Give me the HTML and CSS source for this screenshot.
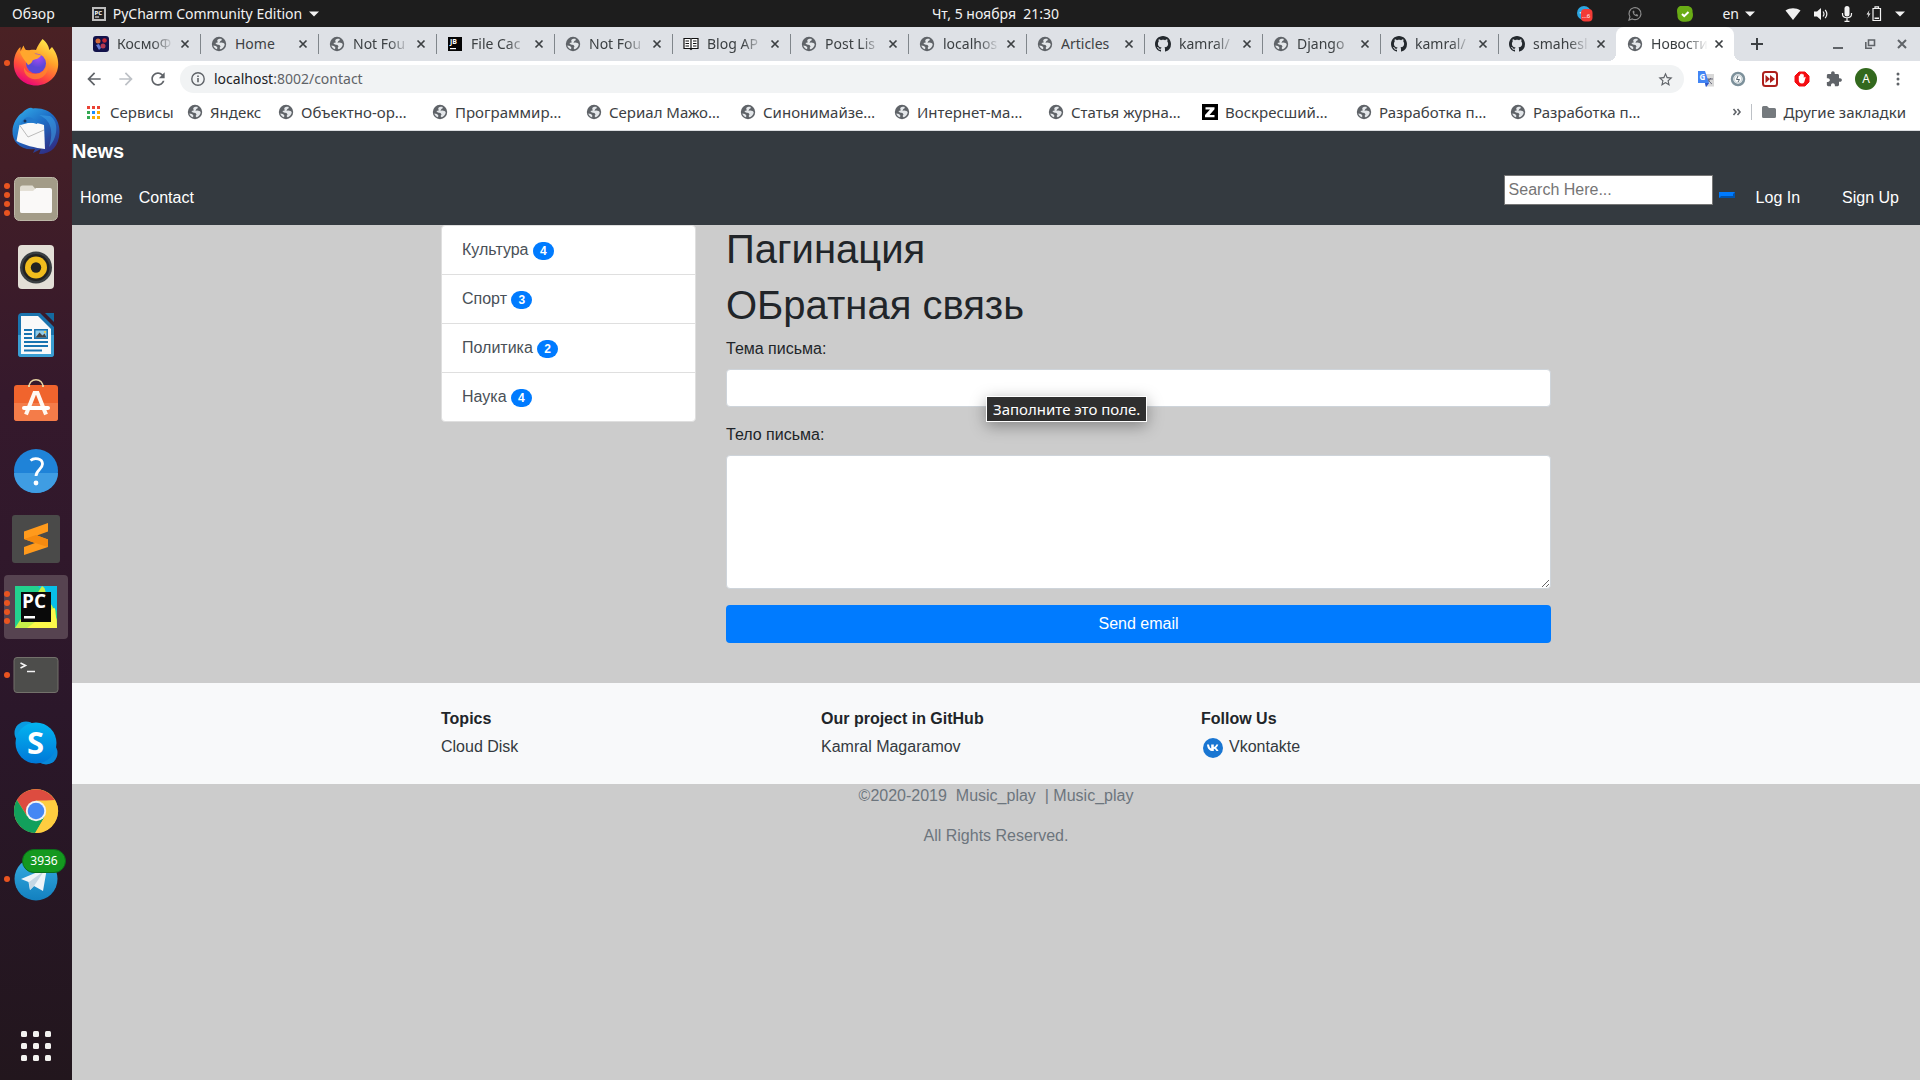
FILE: index.html
```html
<!DOCTYPE html>
<html lang="ru">
<head>
<meta charset="utf-8">
<meta name="viewport" content="width=device-width, initial-scale=1">
<title>Новости</title>
<link rel="stylesheet" href="styles.css">
</head>
<body>
<svg class="defs" aria-hidden="true">
  <symbol id="globe" viewBox="0 0 16 16"><circle cx="8" cy="8" r="7.2" fill="#5f6368"/><path d="M6.2 4.2c.6-1.200 2.600-1.600 4-1.500l.8 1.300-1.600 1-1 1.700 2-.2c1.400.2 3 .6 3.300 1.800-.1 2.400-2.200 4.600-4.400 5l-.7-1.300.9-1.500-1-1.400-2.700-.7-1.500-1.300 2.400-.6z" fill="#e4e7ea"/><path d="M2.300 9.500l2.700.6 1.400 1.400-.4 1.800C4 12.600 2.700 11.300 2.300 9.500z" fill="#e4e7ea"/></symbol>
  <symbol id="github" viewBox="0 0 16 16"><path fill="#24292e" d="M8 0C3.580 0 0 3.580 0 8c0 3.540 2.290 6.530 5.470 7.590.4.070.55-.17.55-.38 0-.19-.01-.82-.01-1.490-2.010.37-2.530-.49-2.690-.94-.09-.23-.48-.94-.82-1.130-.28-.15-.68-.52-.01-.53.63-.01 1.080.58 1.230.82.72 1.210 1.870.87 2.330.66.07-.52.28-.87.51-1.070-1.780-.2-3.640-.89-3.640-3.950 0-.87.31-1.590.82-2.150-.08-.2-.36-1.020.08-2.120 0 0 .67-.21 2.200.82.64-.18 1.320-.27 2-.27.68 0 1.360.09 2 .27 1.530-1.040 2.200-.82 2.200-.82.44 1.100.16 1.920.08 2.120.51.56.82 1.270.82 2.150 0 3.070-1.870 3.750-3.650 3.950.29.25.54.73.54 1.480 0 1.070-.01 1.930-.01 2.200 0 .21.15.46.55.38A8.010 8.010 0 0 0 16 8c0-4.420-3.580-8-8-8z"/></symbol>
  <symbol id="cross" viewBox="0 0 14 14"><path d="M3.500 3.500l7 7M10.500 3.500l-7 7" stroke="currentColor" stroke-width="1.700"/></symbol>
  <symbol id="caret" viewBox="0 0 10 6"><path d="M0 .5h10L5 5.500z" fill="currentColor"/></symbol>
</svg>

<header class="topbar">
  <div class="topbar-left">
    <button class="top-item overview">Обзор</button>
    <button class="top-item app-menu">
      <svg width="14" height="14" viewBox="0 0 14 14"><path d="M0 0h14v14H0z" fill="#bdbdbd"/><path d="M2 2h10v10H2z" fill="#222"/><text x="2.500" y="7.500" font-size="6" font-weight="700" fill="#fff">PC</text><path d="M3 9.500h4v1H3z" fill="#fff"/></svg>
      PyCharm Community Edition
      <svg width="10" height="6"><use href="#caret"/></svg>
    </button>
  </div>
  <button class="top-item clock">Чт, 5 ноября &nbsp;21:30</button>
  <div class="topbar-right">
    <div class="tray">
      <svg width="16" height="16" viewBox="0 0 16 16"><circle cx="7" cy="7" r="7" fill="#2ca5e0"/><path d="M2 7l4-2v3z" fill="#fff"/><rect x="4" y="3" width="11.500" height="12.500" rx="4" fill="#f23b36"/><text x="5" y="12" font-size="6" fill="#fff">...6</text></svg>
      <svg width="16" height="16" viewBox="0 0 16 16" fill="none" stroke="#8c8c8c"><path d="M2 14l.9-3.200A6 6 0 1 1 5.300 13z" stroke-width="1.200"/><path d="M5.600 5.200c0 3 2.300 5 5 5.200l.7-1.500-1.800-.8-.8.7c-.9-.4-1.400-1-1.700-1.700l.7-.8-.8-1.700z" fill="#8c8c8c" stroke="none"/></svg>
      <svg width="16" height="16" viewBox="0 0 16 16"><path d="M3 0h7c4 0 6 3 5.500 6 1.500 4-.5 10-5 9.500C5 16.500 0 15 .5 9 0 6-1 2 3 0z" fill="#69ac15"/><path d="M5 8l2.200 2.200L11.500 6" stroke="#fff" stroke-width="2" fill="none"/></svg>
    </div>
    <button class="top-item lang">en <svg width="10" height="6"><use href="#caret"/></svg></button>
    <div class="status">
      <svg width="16" height="14" viewBox="0 0 16 14"><path d="M.5 3.500C5 .4 11 .4 15.500 3.500L8 13z" fill="#f2f2f2"/></svg>
      <svg width="16" height="14" viewBox="0 0 16 14"><path d="M1 4.500h3L8 1v12L4 9.500H1z" fill="#f2f2f2"/><path d="M10 4.500q2 2.500 0 5M12.200 2.800q3.300 4.200 0 8.400" stroke="#f2f2f2" fill="none" stroke-width="1.200"/></svg>
      <svg width="12" height="16" viewBox="0 0 12 16"><rect x="3.500" y="0" width="5" height="10.500" rx="2.500" fill="#f2f2f2"/><path d="M1.500 7v1c0 5 9 5 9 0V7M6 12v3M3.500 15.300h5" stroke="#f2f2f2" fill="none" stroke-width="1.200"/></svg>
      <svg width="18" height="16" viewBox="0 0 18 16"><path d="M4.500 4L1.500 8.500h2L2.500 12l3-4.500h-2z" fill="#f2f2f2"/><path d="M8 2.500h7.500v12H8zM10 2V.8h3.500V2" stroke="#f2f2f2" stroke-width="1.200" fill="none"/><path d="M9.500 11.500h4.500v1.500H9.500z" fill="#f2f2f2"/></svg>
      <svg width="10" height="6"><use href="#caret"/></svg>
    </div>
  </div>
</header>

<div class="desktop">
<nav class="dock" aria-label="Dock">
  <button class="launcher" aria-label="Firefox"><span class="dots"><i></i></span>
    <svg width="48" height="48" viewBox="0 1 48 48"><defs><linearGradient id="ff1" x1=".8" y1="0" x2=".3" y2="1"><stop offset="0" stop-color="#fff44f"/><stop offset=".4" stop-color="#ffa02a"/><stop offset=".72" stop-color="#ff4a3d"/><stop offset="1" stop-color="#e8007e"/></linearGradient><radialGradient id="ff2" cx=".6" cy=".2"><stop offset="0" stop-color="#a64bf5"/><stop offset="1" stop-color="#5b47d6"/></radialGradient></defs><path d="M30.500 1c5 4 6.500 8 6.700 11l2.800-3c4 5 6.400 11 6.200 17.500C46 38.500 36 47.500 24 47.500S2 38.500 1.800 26.500C1.600 19 4.500 12 8.500 9v4l3-5.500c1 3 2 4.500 4 5.500 3-1.500 6-1.500 8.500-1C25.500 8 28 4 30.500 1z" fill="url(#ff1)"/><circle cx="24" cy="25.500" r="10" fill="url(#ff2)"/><path d="M8 14c5-3.500 12-2 15 2l6 1c-1 3.500-5 4-8 5-1 1.500-1.500 4-5 5-1-2-6-7-8-13z" fill="#ffa72d"/><path d="M33 15c7 10 0 21-10 21-7 0-10-4-11-7-1 8 6 13 13 12 11-1 15-15 8-26z" fill="#ff8a2b" opacity=".7"/></svg>
  </button>
  <button class="launcher" aria-label="Thunderbird">
    <svg width="48" height="48" viewBox="0 0 48 48"><defs><linearGradient id="tb" x1="0" y1="0" x2=".7" y2="1"><stop offset="0" stop-color="#34b3ee"/><stop offset=".5" stop-color="#1d6cc5"/><stop offset="1" stop-color="#2f2f86"/></linearGradient></defs><path d="M10 6C15 1 19 0 21 1.500 38 0 48 12 47.500 25 47 39 40 47 27 47l2-5-8 4 2-4C9 44 0 35 .5 24 .6 17 5 9 10 6z" fill="url(#tb)"/><path d="M27 8c12 5 15 16 10 32 8-8 11-25 1-31z" fill="#3fa8ec" opacity=".5"/><path d="M7.500 18C14 15 24 15 32 18l1 24C23 41 12 38 4.500 34z" fill="#f8f8f8"/><path d="M7.500 18l8.500 12 16-7" stroke="#bbb" fill="none"/><path d="M8 18c3-7 7-9 12-7 5 3 6 5 5 6-8-3-12 0-17 1z" fill="#227ace"/><circle cx="13" cy="14" r="1.500" fill="#15325b"/></svg>
  </button>
  <button class="launcher" aria-label="Файлы"><span class="dots"><i></i><i></i><i></i><i></i></span>
    <svg width="48" height="48" viewBox="0 0 48 48"><rect x="2.500" y="2.500" width="43" height="43" rx="5" fill="#a39c88" stroke="#bdb8a8"/><path d="M8 13q0-2.500 2.500-2.500h10l3 3.500H38v10H8z" fill="#e1ddd2"/><rect x="8" y="15" width="32" height="23" rx="2" fill="#e4e0d6"/><path d="M8 16h13l3-3h14q2 0 2 2v21q0 2-2 2H10q-2 0-2-2z" fill="#faf9f8"/></svg>
  </button>
  <button class="launcher" aria-label="Rhythmbox">
    <svg width="48" height="48" viewBox="0 0 48 48"><rect x="6" y="2" width="36" height="44" rx="4" fill="#e3dfd7"/><circle cx="24" cy="24.500" r="16" fill="#3a3f42"/><circle cx="24" cy="24.500" r="13.500" fill="#222"/><circle cx="24" cy="24.500" r="11" fill="#f0bc1d"/><circle cx="24" cy="24.500" r="5.200" fill="#222"/></svg>
  </button>
  <button class="launcher" aria-label="LibreOffice Writer">
    <svg width="48" height="48" viewBox="0 0 48 48"><path d="M10 2h18l14 14v27q0 3-3 3H9q-3 0-3-3V6q0-4 4-4z" fill="#1a74ae"/><path d="M6 24h36v19q0 3-3 3H9q-3 0-3-3z" fill="#3a9ed2"/><path d="M33 2h9v9z" fill="#146aa0"/><path d="M9 5h17l13 13v25H9z" fill="#f9f9f9"/><path d="M12 19h8M12 23h8M12 27h8M12 31h24M12 35h24M12 39.500h18" stroke="#1873b0" stroke-width="1.800"/><path d="M22 18h14v10H22z" fill="#1873b0"/><path d="M23.500 19.500h11v7h-11z" fill="#8fcbe9"/><path d="M23.500 26.500l4-5 3 3 2-2 2 4z" fill="#444"/><circle cx="33" cy="21" r="1" fill="#fc3"/></svg>
  </button>
  <button class="launcher" aria-label="Ubuntu Software">
    <svg width="48" height="48" viewBox="0 4 48 48"><path d="M17 13c-1-11 15-11 14 0" fill="none" stroke="#e7d3a1" stroke-width="1.500"/><rect x="2" y="10" width="44" height="36" rx="3" fill="#f0642d"/><path d="M2 28h44v15q0 3-3 3H5q-3 0-3-3z" fill="#f47c49"/><path d="M17 10v2M31 10v2" stroke="#e7d3a1" stroke-width="2"/><path d="M14 39.500L22.500 18h3L34 39.500" fill="none" stroke="#fff8f2" stroke-width="4"/><path d="M12 33h24" stroke="#fff" stroke-width="4" stroke-linecap="round"/></svg>
  </button>
  <button class="launcher" aria-label="Справка">
    <svg width="48" height="48" viewBox="0 0 48 48"><circle cx="24" cy="24" r="22" fill="#1f83d8"/><path d="M2 26a22 20 0 0 0 44 0z" fill="#3f9de3"/><path d="M18.500 13.500c4-3.500 12-2 12 3.500 0 5-6.500 6-6.500 12" fill="none" stroke="#fff" stroke-width="2.800"/><circle cx="24" cy="36" r="2.400" fill="#fff"/></svg>
  </button>
  <button class="launcher" aria-label="Sublime Text">
    <svg width="48" height="48" viewBox="0 0 48 48"><rect width="48" height="48" rx="3" fill="#4a4a49"/><path d="M12 16.500L36 8v8.500L25 20.500l11 4V32L12 40v-8l11-4-11-4z" fill="#ff9a1c"/><path d="M12 24l11 4 13 4v-7.500L24 20z" fill="#f58a10"/></svg>
  </button>
  <button class="launcher running" aria-label="PyCharm"><span class="dots"><i></i><i></i><i></i><i></i></span>
    <svg width="48" height="48" viewBox="0 0 48 48"><path d="M3 3h42v42H3z" fill="#23d28e"/><path d="M26 3h19v25z" fill="#0fc5e6"/><path d="M3 45L30 3l5 4 10 30v8z" fill="#c7f04a"/><path d="M15 45l28-21 2 21z" fill="#fdf84a"/><path d="M32 3h13v25l-9-10z" fill="#08bfe8"/><path d="M9 9h30v30H9z" fill="#0a0a0a"/><text class="logo-text" x="10" y="25" font-size="19">PC</text><path d="M12 33h11v2.500H12z" fill="#fff"/></svg>
  </button>
  <button class="launcher" aria-label="Терминал"><span class="dots"><i></i></span>
    <svg width="48" height="48" viewBox="0 0 48 48"><rect x="2" y="6.500" width="44" height="35" rx="3" fill="#4d4d4b" stroke="#73716b"/><path d="M8.500 12l5 2.500-5 2.500M15 20.500h8" stroke="#f4f4f4" fill="none" stroke-width="1.600"/></svg>
  </button>
  <button class="launcher" aria-label="Skype">
    <svg width="48" height="48" viewBox="0 0 48 48"><defs><linearGradient id="sk" x2="0" y2="1"><stop offset="0" stop-color="#03b4f0"/><stop offset="1" stop-color="#0078d8"/></linearGradient></defs><circle cx="14" cy="14" r="11.500" fill="#0a9be0"/><circle cx="34" cy="34" r="11.500" fill="#0889da"/><circle cx="24" cy="24" r="20.500" fill="url(#sk)"/><text class="logo-text" x="15" y="35" font-size="31">S</text></svg>
  </button>
  <button class="launcher" aria-label="Chrome">
    <svg width="48" height="48" viewBox="0 0 48 48"><circle cx="24" cy="24" r="22" fill="#fecd40"/><path d="M4.900 13A22 22 0 0 1 43 13.500H24L15 29z" fill="#dd4c40"/><path d="M4.900 13A22 22 0 0 0 23.500 46L33 29 15 29z" fill="#12a05c"/><path d="M43 13A22 22 0 0 1 23 46l9-15 2-17z" fill="#fecd40"/><circle cx="24" cy="24" r="10.200" fill="#f2f2f2"/><circle cx="24" cy="24" r="8.300" fill="#4587f4"/></svg>
  </button>
  <button class="launcher" aria-label="Telegram"><span class="dots"><i></i></span>
    <svg width="48" height="48" viewBox="0 0 48 48"><defs><linearGradient id="tg" x2="0" y2="1"><stop offset="0" stop-color="#37aee2"/><stop offset="1" stop-color="#1380bf"/></linearGradient></defs><circle cx="24" cy="24" r="21.500" fill="url(#tg)"/><path d="M9 24l26-11-4 23-9-5-4 4-1.500-8z" fill="#eff4f8"/><path d="M17 27l15-11-10 15-4 4z" fill="#c5d7e4"/></svg>
    <span class="count">3936</span>
  </button>
  <button class="launcher apps" aria-label="Показать приложения">
    <svg width="32" height="32" viewBox="0 0 32 32" fill="#f3f2f0"><rect x="1" y="1" width="6" height="6" rx="1.500"/><rect x="13" y="1" width="6" height="6" rx="1.500"/><rect x="25" y="1" width="6" height="6" rx="1.500"/><rect x="1" y="13" width="6" height="6" rx="1.500"/><rect x="13" y="13" width="6" height="6" rx="1.500"/><rect x="25" y="13" width="6" height="6" rx="1.500"/><rect x="1" y="25" width="6" height="6" rx="1.500"/><rect x="13" y="25" width="6" height="6" rx="1.500"/><rect x="25" y="25" width="6" height="6" rx="1.500"/></svg>
  </button>
</nav>

<div class="browser">
  <div class="tabstrip">
    <div class="tab"><svg class="fav" viewBox="0 0 16 16"><rect width="16" height="16" rx="3" fill="#12124a"/><circle cx="5" cy="5" r="2.500" fill="#d46a3a"/><circle cx="11.500" cy="4.500" r="2.300" fill="#c42834"/><circle cx="10" cy="10" r="2.500" fill="#b43a52"/><path d="M3 9l3-1 2 4-2 2z" fill="#6479d2"/></svg><a href="#" class="tab-title">КосмоФ</a><button class="tab-close" aria-label="Закрыть"><svg width="14" height="14"><use href="#cross"/></svg></button></div>
    <div class="tab"><svg class="fav"><use href="#globe"/></svg><a href="#" class="tab-title whole">Home</a><button class="tab-close" aria-label="Закрыть"><svg width="14" height="14"><use href="#cross"/></svg></button></div>
    <div class="tab"><svg class="fav"><use href="#globe"/></svg><a href="#" class="tab-title">Not Fou</a><button class="tab-close" aria-label="Закрыть"><svg width="14" height="14"><use href="#cross"/></svg></button></div>
    <div class="tab"><svg class="fav" viewBox="0 0 16 16"><path d="M1 1h14v14H1z" fill="#050505"/><text class="logo-text" x="3" y="8" font-size="7">JB</text><path d="M3 12h6v1.200H3z" fill="#fff"/></svg><a href="#" class="tab-title">File Cac</a><button class="tab-close" aria-label="Закрыть"><svg width="14" height="14"><use href="#cross"/></svg></button></div>
    <div class="tab"><svg class="fav"><use href="#globe"/></svg><a href="#" class="tab-title">Not Fou</a><button class="tab-close" aria-label="Закрыть"><svg width="14" height="14"><use href="#cross"/></svg></button></div>
    <div class="tab"><svg class="fav" viewBox="0 0 16 16"><path d="M1 2.500h6l1 .7 1-.7h6v10H9l-1 1-1-1H1zM8 3v10M2.500 5H6M2.500 7.500H6M2.500 10H6M10 5h3.500M10 7.500h3.500M10 10h3.500" fill="#fff" stroke="#111" stroke-width="1.200"/></svg><a href="#" class="tab-title">Blog AP</a><button class="tab-close" aria-label="Закрыть"><svg width="14" height="14"><use href="#cross"/></svg></button></div>
    <div class="tab"><svg class="fav"><use href="#globe"/></svg><a href="#" class="tab-title">Post Lis</a><button class="tab-close" aria-label="Закрыть"><svg width="14" height="14"><use href="#cross"/></svg></button></div>
    <div class="tab"><svg class="fav"><use href="#globe"/></svg><a href="#" class="tab-title">localhos</a><button class="tab-close" aria-label="Закрыть"><svg width="14" height="14"><use href="#cross"/></svg></button></div>
    <div class="tab"><svg class="fav"><use href="#globe"/></svg><a href="#" class="tab-title whole">Articles</a><button class="tab-close" aria-label="Закрыть"><svg width="14" height="14"><use href="#cross"/></svg></button></div>
    <div class="tab"><svg class="fav"><use href="#github"/></svg><a href="#" class="tab-title">kamral/</a><button class="tab-close" aria-label="Закрыть"><svg width="14" height="14"><use href="#cross"/></svg></button></div>
    <div class="tab"><svg class="fav"><use href="#globe"/></svg><a href="#" class="tab-title">Django</a><button class="tab-close" aria-label="Закрыть"><svg width="14" height="14"><use href="#cross"/></svg></button></div>
    <div class="tab"><svg class="fav"><use href="#github"/></svg><a href="#" class="tab-title">kamral/</a><button class="tab-close" aria-label="Закрыть"><svg width="14" height="14"><use href="#cross"/></svg></button></div>
    <div class="tab"><svg class="fav"><use href="#github"/></svg><a href="#" class="tab-title">smahesl</a><button class="tab-close" aria-label="Закрыть"><svg width="14" height="14"><use href="#cross"/></svg></button></div>
    <div class="tab active"><svg class="fav"><use href="#globe"/></svg><a href="#" class="tab-title">Новости</a><button class="tab-close" aria-label="Закрыть"><svg width="14" height="14"><use href="#cross"/></svg></button></div>
    <button class="new-tab" aria-label="Новая вкладка"><svg width="14" height="14" viewBox="0 0 14 14"><path d="M7 1v12M1 7h12" stroke="#3c4043" stroke-width="2"/></svg></button>
    <div class="window-controls">
      <button aria-label="Свернуть"><svg width="14" height="14" viewBox="0 0 14 14"><path d="M2 11h10" stroke="#5f6368" stroke-width="2"/></svg></button>
      <button aria-label="Восстановить"><svg width="14" height="14" viewBox="0 0 14 14" fill="none" stroke="#5f6368" stroke-width="1.600"><path d="M5.500 3h6v5.500h-6zM2.800 5v6.200H9"/></svg></button>
      <button aria-label="Закрыть окно"><svg width="14" height="14" viewBox="0 0 14 14"><path d="M3 3l8 8M11 3l-8 8" stroke="#5f6368" stroke-width="2"/></svg></button>
    </div>
  </div>

  <div class="toolbar">
    <button class="tool" aria-label="Назад"><svg viewBox="0 0 24 24" fill="#5f6368"><path d="M20 11H7.830l5.590-5.590L12 4l-8 8 8 8 1.410-1.410L7.830 13H20v-2z"/></svg></button>
    <button class="tool" aria-label="Вперёд"><svg viewBox="0 0 24 24" fill="#bdc1c6"><path d="M4 11h12.170l-5.590-5.590L12 4l8 8-8 8-1.410-1.410L16.170 13H4v-2z"/></svg></button>
    <button class="tool" aria-label="Обновить"><svg viewBox="0 0 24 24" fill="#5f6368"><path d="M17.650 6.350C16.200 4.900 14.210 4 12 4c-4.420 0-7.990 3.580-7.990 8s3.570 8 7.990 8c3.730 0 6.840-2.550 7.730-6h-2.080c-.82 2.330-3.040 4-5.650 4-3.310 0-6-2.690-6-6s2.690-6 6-6c1.660 0 3.140.69 4.220 1.780L13 11h7V4l-2.350 2.350z"/></svg></button>
    <div class="omnibox">
      <svg width="16" height="16" viewBox="0 0 16 16"><circle cx="8" cy="8" r="6.200" fill="none" stroke="#5f6368" stroke-width="1.400"/><path d="M8 7v4.300M8 4.400v1.500" stroke="#5f6368" stroke-width="1.600"/></svg>
      <a class="url" href="#"><b>localhost</b>:8002/contact</a>
      <button class="star" aria-label="Добавить в закладки"><svg width="17" height="17" viewBox="0 0 24 24" fill="#5f6368"><path d="M22 9.240l-7.190-.62L12 2 9.190 8.630 2 9.240l5.460 4.730L5.820 21 12 17.270 18.180 21l-1.630-7.030L22 9.240zM12 15.400l-3.760 2.270 1-4.280-3.320-2.880 4.380-.38L12 6.100l1.710 4.040 4.380.38-3.320 2.880 1 4.280L12 15.400z"/></svg></button>
    </div>
    <button class="tool" aria-label="Переводчик"><svg viewBox="0 0 20 20"><path d="M8 5h10v12.500h-7z" fill="#d8d8d8"/><path d="M10 15l5-6M11 10h6M12 10c1 3 3 4 4 5" stroke="#667" fill="none"/><path d="M2 2h7l4 12-3 4-1-4H2z" fill="#4285f4"/><path d="M9 14h4l-3 4z" fill="#3457c5"/><text x="3.500" y="11" font-size="8" font-weight="700" fill="#fff">G</text></svg></button>
    <button class="tool" aria-label="Расширение"><svg viewBox="0 0 20 20" fill="none"><circle cx="10" cy="10" r="6" stroke="#7d919b" stroke-width="2.500"/><circle cx="10" cy="10" r="3.800" stroke="#c4cfd3"/><path d="M10 7l-1.500 3.500h3L10 13" stroke="#54656f"/></svg></button>
    <button class="tool" aria-label="Видео"><svg viewBox="0 0 20 20"><rect x="3" y="3" width="14" height="14" rx="2.500" fill="#fff" stroke="#ad201c" stroke-width="2"/><path d="M5.500 6l4.500 4-4.500 4zM10 6l5 4-5 4z" fill="#ad201c"/></svg></button>
    <button class="tool" aria-label="AdBlock"><svg viewBox="0 0 20 20"><path d="M7 3h6l4 4v6l-4 4H7l-4-4V7z" fill="#f40d12" stroke="#f40d12" stroke-linejoin="round"/><path d="M6.800 7q.6-.8 1.200 0V5.500q.6-.8 1.200 0V5q.7-.8 1.400 0v.5q.8-.6 1.200.2V9l1-1.200q.9-.2.8.7L12.300 13q-.6 1.500-2.500 1.500-2.500 0-3-2.500z" fill="#fff"/></svg></button>
    <button class="tool" aria-label="Расширения"><svg viewBox="-2 -2 28 28" fill="#5f6368"><path d="M20.500 11H19V7c0-1.100-.9-2-2-2h-4V3.500C13 2.120 11.880 1 10.500 1S8 2.120 8 3.500V5H4c-1.100 0-1.990.9-1.990 2v3.800H3.500c1.490 0 2.700 1.210 2.700 2.700s-1.210 2.700-2.700 2.700H2V20c0 1.100.9 2 2 2h3.800v-1.500c0-1.490 1.210-2.700 2.700-2.700 1.490 0 2.700 1.210 2.700 2.700V22H17c1.100 0 2-.9 2-2v-4h1.500c1.380 0 2.500-1.120 2.500-2.500S21.880 11 20.500 11z"/></svg></button>
    <button class="tool avatar" aria-label="Профиль"><span>A</span></button>
    <button class="tool" aria-label="Меню"><svg viewBox="0 0 20 20" fill="#5f6368"><circle cx="10" cy="5" r="1.500"/><circle cx="10" cy="10" r="1.500"/><circle cx="10" cy="15" r="1.500"/></svg></button>
  </div>

  <div class="bookmarks">
    <a class="bookmark apps-link" href="#"><svg width="14" height="14" viewBox="0 0 14 14"><path d="M1 1h3v3H1zM6 1h3v3H6zM11 1h3v3h-3z" fill="#ea4335"/><path d="M1 6h3v3H1zM1 11h3v3H1z" fill="#34a853"/><path d="M6 6h3v3H6z" fill="#1a8cff"/><path d="M11 6h3v3h-3zM6 11h3v3H6zM11 11h3v3h-3z" fill="#fbab05"/></svg>Сервисы</a>
    <a class="bookmark short" href="#"><svg class="fav"><use href="#globe"/></svg>Яндекс</a>
    <a class="bookmark" href="#"><svg class="fav"><use href="#globe"/></svg>Объектно-ор…</a>
    <a class="bookmark" href="#"><svg class="fav"><use href="#globe"/></svg>Программир…</a>
    <a class="bookmark" href="#"><svg class="fav"><use href="#globe"/></svg>Сериал Мажо…</a>
    <a class="bookmark" href="#"><svg class="fav"><use href="#globe"/></svg>Синонимайзе…</a>
    <a class="bookmark" href="#"><svg class="fav"><use href="#globe"/></svg>Интернет-ма…</a>
    <a class="bookmark" href="#"><svg class="fav"><use href="#globe"/></svg>Статья журна…</a>
    <a class="bookmark" href="#"><svg class="fav" viewBox="0 0 16 16"><path d="M0 0h16v16H0z"/><path d="M3.500 3.200h9v2L7.500 11h5v2.200h-9.500V11L8 5.400H3.500z" fill="#fff"/></svg>Воскресший…</a>
    <a class="bookmark" href="#"><svg class="fav"><use href="#globe"/></svg>Разработка п…</a>
    <a class="bookmark" href="#"><svg class="fav"><use href="#globe"/></svg>Разработка п…</a>
    <div class="bookmarks-end">
      <button class="more" aria-label="Ещё закладки"><svg width="10" height="10" viewBox="0 0 10 10"><path d="M1.500 2L4 5 1.500 8M5.500 2L8 5 5.500 8" fill="none" stroke="#5f6368" stroke-width="1.600"/></svg></button>
      <a class="bookmark other" href="#"><svg class="fav" viewBox="0 0 16 16"><path d="M1 3.500Q1 2 2.500 2H6l2 2h5.500Q15 4 15 5.500v7q0 1.500-1.500 1.500h-11Q1 14 1 12.500z" fill="#757a7e"/></svg>Другие закладки</a>
    </div>
  </div>

  <div class="page">
    <nav class="navbar">
      <a class="brand" href="#">News</a>
      <div class="nav-row">
        <div class="nav-links"><a href="#">Home</a><a href="#">Contact</a></div>
        <form class="search">
          <input type="text" placeholder="Search Here..." aria-label="Search">
          <button type="button" aria-label="Search"></button>
        </form>
        <div class="nav-auth"><a href="#">Log In</a><a href="#">Sign Up</a></div>
      </div>
    </nav>

    <main class="container content">
      <aside class="list">
        <a href="#">Культура <span class="badge">4</span></a>
        <a href="#">Спорт <span class="badge">3</span></a>
        <a href="#">Политика <span class="badge">2</span></a>
        <a href="#">Наука <span class="badge">4</span></a>
      </aside>
      <section>
        <h1>Пагинация</h1>
        <h1>ОБратная связь</h1>
        <form class="contact-form">
          <label for="subject">Тема письма:</label>
          <div class="field">
            <input id="subject" class="control" type="text" required>
            <div class="tooltip" role="tooltip">Заполните это поле.</div>
          </div>
          <label for="message">Тело письма:</label>
          <textarea id="message" class="control" rows="5" required></textarea>
          <button class="send" type="button">Send email</button>
        </form>
      </section>
    </main>

    <footer>
      <div class="footer-band">
        <div class="container footer-grid">
          <div><h6>Topics</h6><a href="#">Cloud Disk</a></div>
          <div><h6>Our project in GitHub</h6><a href="#">Kamral Magaramov</a></div>
          <div><h6>Follow Us</h6><a class="vk" href="#"><svg width="24" height="24" viewBox="0 0 24 24"><circle cx="12" cy="13" r="10" fill="#1976d2"/><path d="M6 9.500h2c.4 2.200 1.200 3.500 2.200 4V9.500h2.600v2.600c1.200-.3 1.900-1.300 2.500-2.600h2c-.5 1.600-1.300 2.700-2.300 3.400 1.100.7 2 1.700 2.600 3.200h-2.200c-.6-1.200-1.400-2-2.600-2.300v2.300H12c-3.600 0-5.700-2.500-6-6.600z" fill="#fff"/></svg>Vkontakte</a></div>
        </div>
      </div>
      <div class="copyright">
        <p>©2020-2019&nbsp; <a href="#">Music_play</a>&nbsp; | <a href="#">Music_play</a></p>
        <p>All Rights Reserved.</p>
      </div>
    </footer>
  </div>
</div>
</div>
</body>
</html>
```
FILE: styles.css
```css
*, *::before, *::after { box-sizing: border-box; }

body {
  margin: 0;
  min-height: 100vh;
  display: flex;
  flex-direction: column;
  background: #ccc;
  color: #212529;
  font: 16px/24px "Liberation Sans", Arial, sans-serif;
}

a { color: inherit; text-decoration: none; }
h1, h6, p { margin: 0; }
button { font: inherit; color: inherit; cursor: pointer; }
svg { flex: none; display: block; }
.defs { position: absolute; width: 0; height: 0; }

/* Shell top bar */
.topbar {
  display: flex;
  align-items: center;
  height: 27px;
  padding-right: 15px;
  background: #1d1d1d;
  color: #f2f2f2;
  font: 14px/20px "Noto Sans", "Open Sans", sans-serif;
}
.topbar-left { flex: 1 1 86px; display: flex; gap: 37px; padding-left: 12px; }
.topbar-right { flex: 1 1 0; display: flex; align-items: center; justify-content: flex-end; gap: 29px; }
.top-item { display: flex; align-items: center; gap: 6px; padding: 0; border: 0; background: none; white-space: nowrap; }
.app-menu { gap: 7px; }
.tray { display: flex; gap: 34px; }
.status { display: flex; align-items: center; gap: 12px; margin-left: 1px; }

/* Desktop */
.desktop { flex: 1; display: grid; grid-template-columns: 72px minmax(0, 1fr); }
.dock {
  display: flex;
  flex-direction: column;
  padding-top: 2px;
  background: linear-gradient(#4a2124, #35192c 35%, #2b172a 65%, #22161d);
}
.launcher {
  position: relative;
  display: grid;
  place-items: center;
  width: 64px;
  height: 64px;
  margin: 2px 4px;
  padding: 0;
  border: 0;
  border-radius: 4px;
  background: none;
}
.launcher.running { background: #564350; }
.launcher.apps { margin-top: auto; }
.dots {
  position: absolute;
  left: 0;
  top: 0;
  bottom: 0;
  display: flex;
  flex-direction: column;
  justify-content: center;
  gap: 3px;
}
.dots i { width: 6px; height: 6px; border-radius: 50%; background: #e95420; }
.logo-text { font-family: "Open Sans", sans-serif; font-weight: 700; fill: #fff; }
.count {
  position: absolute;
  top: 2px;
  right: 2px;
  width: 44px;
  height: 24px;
  border: 1px solid #0b6e1a;
  border-radius: 12px;
  background: #14981f;
  color: #fff;
  font: 12px/22px "Noto Sans", sans-serif;
  text-align: center;
}

/* Browser chrome */
.browser { display: flex; flex-direction: column; font-family: "Liberation Sans", Arial, sans-serif; }
.tabstrip, .toolbar, .bookmarks { font: 14px/20px "Noto Sans", "Open Sans", sans-serif; color: #3c4043; }
.fav { width: 16px; height: 16px; }
.tabstrip { display: flex; height: 34px; padding: 0 8px 0 10px; background: #dee1e6; }
.tab {
  position: relative;
  flex: 0 1 118px;
  display: flex;
  align-items: center;
  gap: 8px;
  min-width: 0;
  padding: 0 8px 0 11px;
}
.tab + .tab:not(.active)::before {
  content: "";
  position: absolute;
  left: 0;
  top: 7px;
  height: 20px;
  border-left: 1px solid #80868b;
}
.tab-title {
  flex: 1;
  min-width: 0;
  overflow: hidden;
  white-space: nowrap;
  -webkit-mask-image: linear-gradient(90deg, #000 60%, transparent 96%);
  mask-image: linear-gradient(90deg, #000 60%, transparent 96%);
}
.tab-title.whole { -webkit-mask-image: none; mask-image: none; }
.tab-close { padding: 0; margin-left: -6px; border: 0; background: none; }
.tab.active { background: #fff; border-radius: 8px 8px 0 0; }
.tab.active::before, .tab.active::after {
  content: "";
  position: absolute;
  bottom: 0;
  width: 8px;
  height: 8px;
}
.tab.active::before { left: -8px; background: radial-gradient(circle at 0 0, transparent 8px, #fff 8px); }
.tab.active::after { right: -8px; background: radial-gradient(circle at 100% 0, transparent 8px, #fff 8px); }
.new-tab { padding: 0 16px; border: 0; background: none; }
.window-controls { display: flex; gap: 18px; margin-left: auto; padding-right: 3px; }
.window-controls button { padding: 0; border: 0; background: none; }

.toolbar { display: flex; align-items: center; gap: 12px; height: 36px; padding: 0 12px; background: #fff; }
.tool { width: 20px; height: 20px; padding: 0; border: 0; background: none; flex: none; }
.avatar { display: grid; place-items: center; }
.avatar span {
  width: 22px;
  height: 22px;
  margin: -1px;
  border-radius: 50%;
  background: #33691e;
  color: #fff;
  font-size: 12px;
  line-height: 22px;
}
.omnibox {
  flex: 1;
  display: flex;
  align-items: center;
  gap: 8px;
  height: 28px;
  padding: 0 10px;
  border-radius: 14px;
  background: #f1f3f4;
}
.url { flex: 1; color: #5f6368; }
.url b { font-weight: 400; color: #202124; }
.star { padding: 0; border: 0; background: none; }

.bookmarks {
  display: flex;
  align-items: center;
  height: 34px;
  padding: 0 14px 3px;
  border-bottom: 1px solid #dadce0;
  background: #fff;
  font-size: 15px;
  white-space: nowrap;
}
.bookmark { flex: 0 0 154px; display: flex; align-items: center; gap: 7px; }
.bookmark.apps-link { flex-basis: 101px; gap: 10px; }
.bookmark.short { flex-basis: 91px; }
.bookmark.other { flex: none; }
.bookmarks-end { display: flex; align-items: center; margin-left: auto; }
.more { padding: 3px 9px; margin-right: 9px; border: 0; border-right: 1px solid #bdc1c6; background: none; }

/* News site */
.navbar { padding: 8px 0 7px; background: #343a40; color: #fff; }
.brand { display: block; margin-bottom: 12px; font-size: 20px; font-weight: 700; }
.nav-row { display: flex; align-items: flex-end; height: 43px; }
.nav-links { display: flex; flex: 1; }
.nav-links a, .nav-auth a { padding: 8px; }
.nav-auth { display: flex; gap: 26px; padding: 0 13px; }
.search { display: flex; align-items: flex-end; gap: 6px; align-self: flex-start; }
.search input {
  width: 209px;
  height: 30px;
  padding: 2px 4px;
  border: 1px solid #767676;
  font: inherit;
}
.search button {
  margin-bottom: 7px;
  padding: 1px 6px;
  border: 2px outset #007bff;
  background: #007bff;
}

.container { width: 100%; max-width: 1140px; margin: 0 auto; padding: 0 15px; }
.content { display: grid; grid-template-columns: 255px minmax(0, 1fr); gap: 30px; align-items: start; }
.list { border: 1px solid #dfdfdf; border-radius: 4px; background: #fff; color: #495057; }
.list a { display: block; padding: 12px 20px; }
.list a + a { border-top: 1px solid #dfdfdf; }
.badge {
  display: inline-block;
  padding: 3px 7px;
  border-radius: 10px;
  background: #007bff;
  color: #fff;
  font-size: 12px;
  font-weight: 700;
  line-height: 12px;
}
h1 { margin-bottom: 8px; font-size: 40px; font-weight: 400; line-height: 48px; }
label { display: block; margin-bottom: 8px; }
.field { position: relative; margin-bottom: 16px; }
.control {
  display: block;
  width: 100%;
  padding: 6px 12px;
  border: 1px solid #ced4da;
  border-radius: 4px;
  background: #fff;
  font: inherit;
}
input.control { height: 38px; }
textarea.control { margin-bottom: 16px; resize: vertical; }
.tooltip {
  position: absolute;
  left: 260px;
  top: 27px;
  padding: 2px 6px;
  border: 1px solid #fff;
  background: #2f2f2f;
  box-shadow: 0 4px 16px rgba(0, 0, 0, .35);
  color: #fff;
  font: 15px/20px "Noto Sans", sans-serif;
  white-space: nowrap;
}
.send { display: block; width: 100%; height: 38px; border: 0; border-radius: 4px; background: #007bff; color: #fff; }

.footer-band { margin-top: 40px; padding: 24px 0 25px; background: #f8f9fa; }
.footer-grid { display: grid; grid-template-columns: repeat(3, 1fr); column-gap: 30px; }
h6 { margin-bottom: 4px; font-size: 16px; font-weight: 700; }
.footer-grid a { display: block; color: #343a40; }
.footer-grid .vk { display: flex; gap: 4px; }
.copyright { color: #6c757d; text-align: center; }
.copyright p { margin-bottom: 16px; }
```
